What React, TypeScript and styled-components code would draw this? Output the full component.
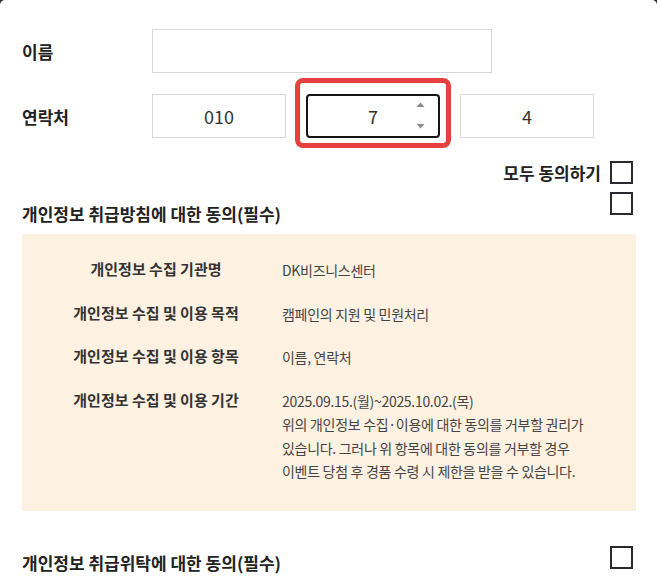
import React, { useState } from "react";
import styled, { createGlobalStyle } from "styled-components";

const GlobalStyle = createGlobalStyle`
  html, body {
    margin: 0;
    padding: 0;
    background: #2b2b2b;
  }
  body {
    font-family: "Noto Sans CJK KR", "Noto Sans", sans-serif;
    color: #222;
  }
`;

const Panel = styled.div`
  width: 657px;
  min-height: 579px;
  box-sizing: border-box;
  background: #ffffff;
  border-radius: 5px 5px 0 0;
  padding: 29px 21px 0 22px;
  overflow: hidden;
`;

const FieldRow = styled.div`
  display: flex;
  align-items: center;
  height: 44px;
  margin-bottom: 21px;
  &:last-of-type {
    margin-bottom: 0;
  }
`;

const FieldLabel = styled.label`
  width: 130px;
  flex-shrink: 0;
  font-size: 17px;
  font-weight: 700;
  color: #222;
`;

const PhoneGroup = styled.div`
  display: flex;
  gap: 20px;
`;

const TextField = styled.input<{ $width: number; $focused?: boolean }>`
  width: ${(p) => p.$width}px;
  height: 44px;
  box-sizing: border-box;
  border: ${(p) => (p.$focused ? "2px solid #151515" : "1px solid #d8d8d8")};
  border-radius: ${(p) => (p.$focused ? "4px" : "0")};
  background: #fff;
  font-family: inherit;
  font-size: 18px;
  color: #333;
  text-align: center;
  outline: none;
  padding: 0;
`;

const Highlight = styled.div`
  position: relative;
  &::after {
    content: "";
    position: absolute;
    top: -16px;
    bottom: -10px;
    left: -11px;
    right: -11px;
    border: 5px solid #e6403f;
    border-radius: 8px;
    pointer-events: none;
  }
`;

const Spinner = styled.svg`
  position: absolute;
  right: 15px;
  top: 8px;
  width: 9px;
  height: 28px;
`;

const AgreeAllRow = styled.div`
  display: flex;
  justify-content: flex-end;
  align-items: center;
  gap: 9px;
  height: 23px;
  margin-top: 23px;
  margin-right: 3px;
  font-size: 17px;
  line-height: 23px;
  font-weight: 700;
  color: #222;
`;

const CheckBox = styled.span`
  display: inline-block;
  width: 23px;
  height: 23px;
  box-sizing: border-box;
  border: 2px solid #2a2a33;
  flex-shrink: 0;
  cursor: pointer;
`;

const SectionHead = styled.div<{ $offset: number; $gap: number }>`
  display: flex;
  justify-content: space-between;
  align-items: flex-start;
  margin-top: ${(p) => p.$gap}px;
  margin-right: 3px;
  h3 {
    margin: 0;
    padding-top: ${(p) => p.$offset}px;
    font-size: 17px;
    line-height: 24px;
    font-weight: 700;
    color: #222;
  }
`;

const InfoBox = styled.div`
  margin-top: 8px;
  background: #fdf1e2;
  padding: 25px 20px 27px 40px;
  display: grid;
  grid-template-columns: 188px 1fr;
  row-gap: 20px;
`;

const InfoLabel = styled.div`
  font-size: 15px;
  font-weight: 700;
  line-height: 20px;
  color: #333;
  text-align: center;
  white-space: nowrap;
`;

const InfoValue = styled.div`
  font-size: 14px;
  line-height: 23.5px;
  color: #444;
  padding-left: 32px;
  letter-spacing: -0.3px;
  white-space: nowrap;
`;

const infoRows: { label: string; value: string[] }[] = [
  { label: "개인정보 수집 기관명", value: ["DK비즈니스센터"] },
  { label: "개인정보 수집 및 이용 목적", value: ["캠페인의 지원 및 민원처리"] },
  { label: "개인정보 수집 및 이용 항목", value: ["이름, 연락처"] },
  {
    label: "개인정보 수집 및 이용 기간",
    value: [
      "2025.09.15.(월)~2025.10.02.(목)",
      "위의 개인정보 수집·이용에 대한 동의를 거부할 권리가",
      "있습니다. 그러나 위 항목에 대한 동의를 거부할 경우",
      "이벤트 당첨 후 경품 수령 시 제한을 받을 수 있습니다.",
    ],
  },
];

const App: React.FC = () => {
  const [name, setName] = useState("");
  const [phone, setPhone] = useState(["010", "7", "4"]);

  const setPart = (i: number, v: string) =>
    setPhone((prev) => prev.map((p, idx) => (idx === i ? v : p)));

  return (
    <>
      <GlobalStyle />
      <Panel>
        <FieldRow>
          <FieldLabel htmlFor="name">이름</FieldLabel>
          <TextField
            id="name"
            $width={340}
            value={name}
            onChange={(e) => setName(e.target.value)}
          />
        </FieldRow>
        <FieldRow>
          <FieldLabel>연락처</FieldLabel>
          <PhoneGroup>
            <TextField
              $width={134}
              value={phone[0]}
              onChange={(e) => setPart(0, e.target.value)}
            />
            <Highlight>
              <TextField
                $width={134}
                $focused
                value={phone[1]}
                onChange={(e) => setPart(1, e.target.value)}
              />
              <Spinner viewBox="0 0 9 28">
                <path d="M4.5 0.5 L8.5 5 L0.5 5 Z" fill="#8c8c8c" />
                <path d="M0.5 22 L8.5 22 L4.5 26.5 Z" fill="#8c8c8c" />
              </Spinner>
            </Highlight>
            <TextField
              $width={134}
              value={phone[2]}
              onChange={(e) => setPart(2, e.target.value)}
            />
          </PhoneGroup>
        </FieldRow>

        <AgreeAllRow>
          모두 동의하기
          <CheckBox />
        </AgreeAllRow>

        <SectionHead $offset={10} $gap={8}>
          <h3>개인정보 취급방침에 대한 동의(필수)</h3>
          <CheckBox />
        </SectionHead>

        <InfoBox>
          {infoRows.map((row) => (
            <React.Fragment key={row.label}>
              <InfoLabel>{row.label}</InfoLabel>
              <InfoValue>
                {row.value.map((line) => (
                  <div key={line}>{line}</div>
                ))}
              </InfoValue>
            </React.Fragment>
          ))}
        </InfoBox>

        <SectionHead $offset={5} $gap={35}>
          <h3>개인정보 취급위탁에 대한 동의(필수)</h3>
          <CheckBox />
        </SectionHead>
      </Panel>
    </>
  );
};

export default App;
